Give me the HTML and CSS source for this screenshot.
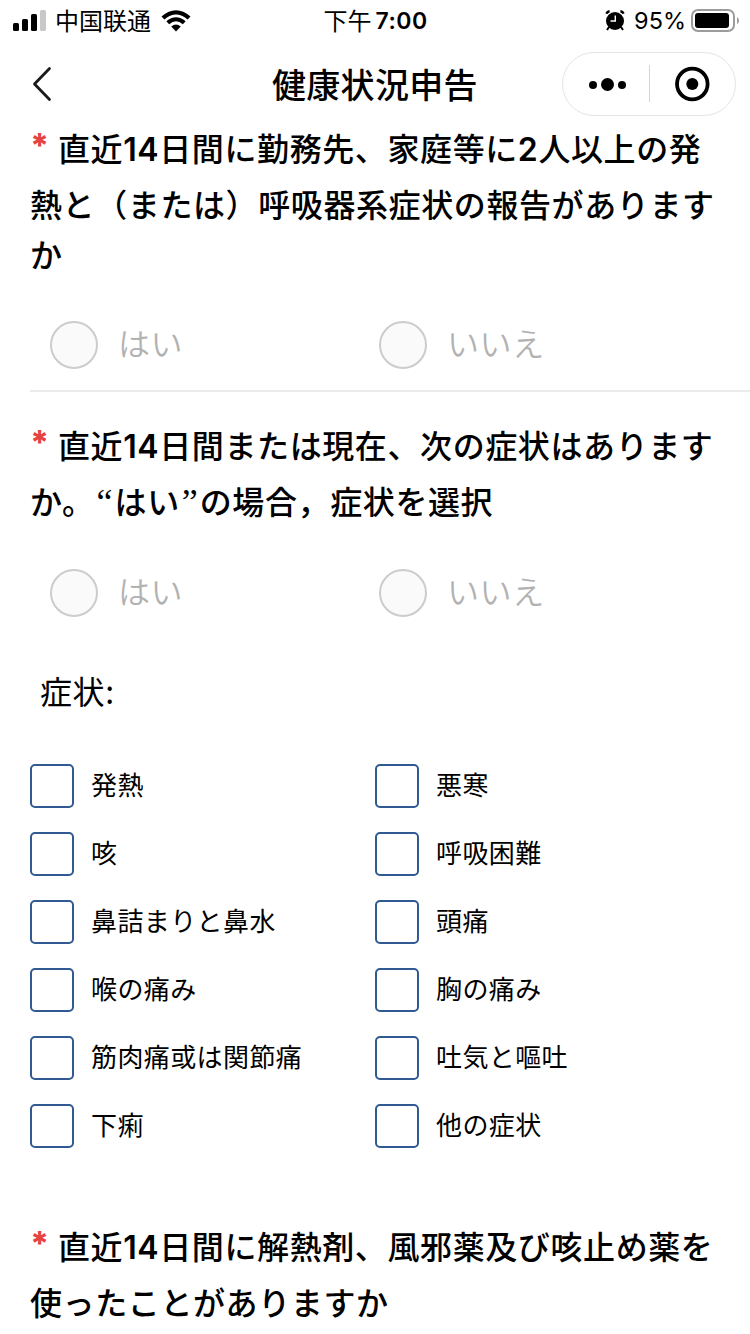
FILE: index.html
```html
<!DOCTYPE html>
<html lang="ja">
<head>
  <meta charset="UTF-8">
  <meta name="viewport" content="width=device-width, initial-scale=1.0">
  <title>健康状況申告</title>
  <link rel="stylesheet" href="styles.css">
</head>
<body>

<div class="status-bar">
  <div class="status-left">
    <svg class="signal" width="33" height="22" viewBox="0 0 33 22">
      <rect x="0" y="13" width="6" height="8" rx="1.5"/>
      <rect x="9" y="9" width="6" height="12" rx="1.5"/>
      <rect x="18" y="4" width="6" height="17" rx="1.5"/>
      <rect x="27" y="0" width="6" height="21" rx="1.5" fill="#c8c8c8"/>
    </svg>
    <span class="carrier">中国联通</span>
    <svg class="wifi" width="30" height="22" viewBox="0 0 30 22">
      <path d="M0.5 6.5 Q15 -5.8 29.5 6.5 L26.6 9.4 Q15 -0.6 3.4 9.4 Z"/>
      <path d="M5.3 11.3 Q15 3 24.7 11.3 L21.8 14.2 Q15 8.4 8.2 14.2 Z"/>
      <path d="M10.2 16.4 Q15 12.4 19.8 16.4 L15 21.4 Z"/>
    </svg>
  </div>
  <div class="status-time">下午<span class="clock">7:00</span></div>
  <div class="status-right">
    <svg class="alarm" width="20" height="21" viewBox="0 0 20 21">
      <circle cx="10" cy="11" r="9"/>
      <path d="M1.6 3.8 Q2 1.6 4.6 1.2 M18.4 3.8 Q18 1.6 15.4 1.2" fill="none" stroke="#000" stroke-width="2.4"/>
      <path d="M4 17 L2 20 M16 17 L18 20" stroke="#000" stroke-width="2"/>
      <path d="M10.3 5.5 V11 H5.5" fill="none" stroke="#fff" stroke-width="1.4"/>
    </svg>
    <span class="percent">95%</span>
    <svg class="battery" width="48" height="24" viewBox="0 0 48 24">
      <rect x="1" y="1" width="42" height="21" rx="6" fill="none" stroke="#9c9c9c" stroke-width="2"/>
      <rect x="4" y="4" width="34" height="15" rx="3"/>
      <path d="M46 8 Q48 9 48 11.5 Q48 14 46 15 Z" fill="#9c9c9c"/>
    </svg>
  </div>
</div>

<div class="nav-bar">
  <svg class="back" width="20" height="36" viewBox="0 0 20 36">
    <path d="M17.5 2.5 L2.5 18 L17.5 33.5" fill="none" stroke="#1a1a1a" stroke-width="2.8" stroke-linecap="round" stroke-linejoin="round"/>
  </svg>
  <h1>健康状況申告</h1>
  <div class="capsule">
    <svg width="172" height="62" viewBox="0 0 172 62">
      <circle cx="30" cy="32" r="4"/>
      <circle cx="44.5" cy="31.5" r="6.5"/>
      <circle cx="59" cy="32" r="4"/>
      <path d="M86.5 12 V49" stroke="#d4d4d4" stroke-width="1"/>
      <circle cx="129.3" cy="31" r="15.3" fill="none" stroke="#000" stroke-width="3.8"/>
      <circle cx="129.3" cy="31" r="6"/>
    </svg>
  </div>
</div>

<div class="question q1">
  <span class="line"><i class="star">*</i>直近<b class="num">14</b>日間に勤務先、家庭等に<b class="num">2</b>人以上の発</span>
  <span class="line">熱と（または）呼吸器系症状の報告があります</span>
  <span class="line short">か</span>
</div>

<div class="radio-group divided">
  <label class="radio"><span class="circle"></span><span class="radio-text">はい</span></label>
  <label class="radio"><span class="circle"></span><span class="radio-text">いいえ</span></label>
</div>

<div class="question q2">
  <span class="line"><i class="star">*</i>直近<b class="num">14</b>日間または現在、次の症状はあります</span>
  <span class="line">か。<b class="quote">“</b>はい<b class="quote">”</b>の場合<span class="comma">，</span>症状を選択</span>
</div>

<div class="radio-group">
  <label class="radio"><span class="circle"></span><span class="radio-text">はい</span></label>
  <label class="radio"><span class="circle"></span><span class="radio-text">いいえ</span></label>
</div>

<div class="sub-title">症状:</div>

<div class="checks">
  <label class="check"><span class="box"></span>発熱</label>
  <label class="check"><span class="box"></span>悪寒</label>
  <label class="check"><span class="box"></span>咳</label>
  <label class="check"><span class="box"></span>呼吸困難</label>
  <label class="check"><span class="box"></span>鼻詰まりと鼻水</label>
  <label class="check"><span class="box"></span>頭痛</label>
  <label class="check"><span class="box"></span>喉の痛み</label>
  <label class="check"><span class="box"></span>胸の痛み</label>
  <label class="check"><span class="box"></span>筋肉痛或は関節痛</label>
  <label class="check"><span class="box"></span>吐気と嘔吐</label>
  <label class="check"><span class="box"></span>下痢</label>
  <label class="check"><span class="box"></span>他の症状</label>
</div>

<div class="question q3">
  <span class="line"><i class="star">*</i>直近<b class="num">14</b>日間に解熱剤、風邪薬及び咳止め薬を</span>
  <span class="line">使ったことがありますか</span>
</div>

</body>
</html>
```
FILE: styles.css
```css
* {
  box-sizing: border-box;
}
body {
  margin: 0;
  width: 750px;
  height: 1334px;
  overflow: hidden;
  background: #fff;
  color: #000;
  font-family: "Noto Sans CJK JP", sans-serif;
}
svg {
  display: block;
  flex: none;
}
.status-bar {
  display: grid;
  grid-template-columns: 1fr auto 1fr;
  height: 40px;
  align-items: center;
  padding: 0 11px 0 13px;
  font-size: 24px;
  line-height: 38px;
}
.status-left,
.status-right,
.status-time {
  display: flex;
  align-items: center;
}
.status-right {
  justify-content: flex-end;
}
.signal,
.wifi {
  margin-top: -1px;
}
.carrier {
  margin: 0 10px 0 9px;
  padding-bottom: 2px;
  font-family: "Noto Sans CJK SC", sans-serif;
}
.status-time {
  margin-left: -1px;
  padding-bottom: 2px;
  font-family: "Noto Sans CJK SC", sans-serif;
}
.clock {
  margin-left: 4px;
  padding-top: 2px;
  font-family: Inter, sans-serif;
  font-weight: 600;
  font-size: 23px;
  letter-spacing: 0.5px;
}
.alarm {
  margin-top: -2px;
}
.battery {
  margin-top: -1px;
}
.percent {
  margin: 0 5px 0 9px;
  font-family: Inter, sans-serif;
  font-size: 23.5px;
}
.nav-bar {
  display: grid;
  grid-template-columns: 240px 1fr auto;
  align-items: center;
  height: 88px;
  padding: 0 14px 0 32px;
}
.nav-bar h1 {
  margin: 0;
  padding-bottom: 1px;
  font-size: 34px;
  font-weight: 500;
  line-height: 48px;
  letter-spacing: 0.3px;
}
.capsule {
  width: 174px;
  height: 64px;
  border: 1px solid #e5e5e5;
  border-radius: 32px;
}
.question {
  padding-left: 30px;
  font-size: 32px;
  font-weight: 500;
  letter-spacing: 0.6px;
  white-space: nowrap;
}
.line {
  display: block;
  height: 56px;
  line-height: 56px;
}
.line.short {
  height: 51px;
  line-height: 44px;
}
.q1 {
  margin-top: -9px;
}
.q2 {
  padding-top: 24px;
}
.q3 {
  padding-top: 69px;
}
.star {
  display: inline-block;
  width: 28px;
  color: #e64340;
  font-family: Inter, sans-serif;
  font-size: 33px;
  font-style: normal;
  font-weight: 800;
  line-height: 1;
  vertical-align: 4px;
}
.num {
  font-family: Inter, sans-serif;
  font-weight: 600;
}
.quote {
  display: inline-block;
  width: 20px;
  text-align: center;
  font-family: "Liberation Serif", serif;
  font-size: 36px;
  font-weight: 400;
  letter-spacing: 0;
  line-height: 1;
}
.comma {
  font-family: "Noto Sans CJK SC", sans-serif;
}
.radio-group {
  display: grid;
  grid-template-columns: 329px 1fr;
  height: 130px;
  margin-left: 30px;
  padding: 41px 0 0 20px;
}
.radio-group.divided {
  height: 110px;
  padding-top: 39px;
  border-bottom: 2px solid #ebebeb;
}
.radio {
  display: flex;
  height: 48px;
  align-items: center;
  color: #b2b2b2;
  font-size: 32px;
  font-weight: 350;
  letter-spacing: 0.6px;
}
.radio-text {
  padding-bottom: 7px;
}
.circle {
  width: 48px;
  height: 48px;
  margin-right: 20px;
  border: 2px solid #ccc;
  border-radius: 50%;
  background: #fafafa;
}
.sub-title {
  padding: 8px 0 0 40px;
  font-size: 32px;
  line-height: 48px;
  letter-spacing: 0.6px;
}
.checks {
  display: grid;
  grid-template-columns: 345px 1fr;
  row-gap: 24px;
  padding: 50px 0 0 30px;
}
.check {
  display: flex;
  height: 44px;
  font-size: 26px;
  line-height: 40px;
  letter-spacing: 0.4px;
}
.box {
  width: 44px;
  height: 44px;
  margin-right: 17px;
  border: 2px solid #315a92;
  border-radius: 5px;
}
```
